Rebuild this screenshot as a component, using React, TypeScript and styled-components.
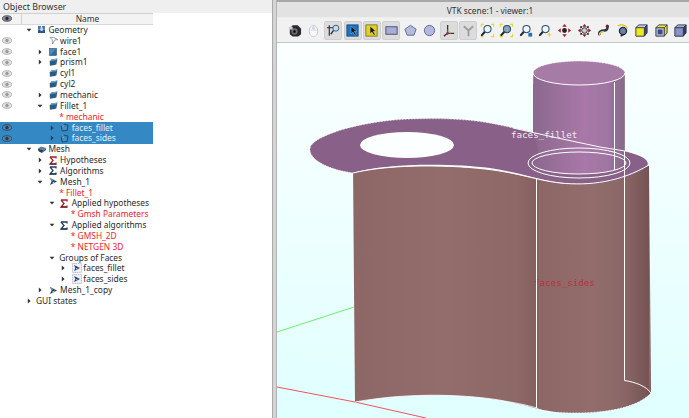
import React from "react";
import styled, { createGlobalStyle } from "styled-components";

const Global = createGlobalStyle`
  html, body { margin: 0; padding: 0; background: #fff; overflow: hidden; }
  #root { width: 689px; height: 418px; }
`;

const Page = styled.div`
  width: 689px; height: 418px; display: flex; overflow: hidden;
  font-family: "Noto Sans", "Open Sans", sans-serif; font-size: 8.4px; color: #2a2a2a;
`;
const Browser = styled.section`
  width: 272px; flex: none; display: flex; flex-direction: column; background: #fff;
`;
const BrowserTitle = styled.div`
  height: 13px; flex: none; background: #efefef; padding-left: 3px; line-height: 14px; font-size: 8.8px; color: #333;
`;
const TreeColumn = styled.div`
  width: 153px; display: flex; flex-direction: column;
`;
const Header = styled.div`
  height: 11.5px; box-sizing: border-box; display: flex; background: #f3f3f3; border-top: 1px solid #d0d0d0; border-bottom: 1px solid #d8d8d8;
`;
const HeaderEye = styled.div`
  width: 22px; flex: none; display: flex; align-items: center; padding-left: 2px; box-sizing: border-box; border-right: 1px solid #d0d0d0;
`;
const HeaderName = styled.div`
  flex: 1; text-align: center; line-height: 10px; color: #333;
`;
const Row = styled.div<{ $selected?: boolean }>`
  height: 10.85px; display: flex; align-items: center; white-space: nowrap;
  background: ${p => (p.$selected ? "#3488c3" : "transparent")};
  color: ${p => (p.$selected ? "#e4eefa" : "#2a2a2a")};
`;
const EyeSlot = styled.div`
  width: 22px; flex: none; padding-left: 2px; box-sizing: border-box; display: flex; align-items: center;
`;
const Indent = styled.div<{ $level: number }>`
  width: ${p => 2 + p.$level * 11.6}px; flex: none;
`;
const ArrowSlot = styled.div`
  width: 12px; flex: none; display: flex; justify-content: center; align-items: center; padding-right: 3px; box-sizing: border-box;
`;
const IconSlot = styled.div`
  width: 12.5px; flex: none; display: flex; align-items: center; padding-left: 1px; box-sizing: border-box;
`;
const Label = styled.span<{ $red?: boolean }>`
  color: ${p => (p.$red ? "#f0232b" : "inherit")}; line-height: 10px;
`;
const Splitter = styled.div`
  width: 5px; flex: none; background: #d4d4d4; border-left: 1px solid #aaa; border-right: 1px solid #b4b4b4; box-sizing: border-box;
`;
const Viewer = styled.section`
  flex: 1; min-width: 0; display: flex; flex-direction: column; border-top: 2px solid #a8a8a8; box-sizing: border-box; background: #f1f1f1;
`;
const ViewerTitle = styled.div`
  height: 16px; box-sizing: border-box; flex: none; background: #e2e2e2; text-align: center; line-height: 17px; font-size: 8.4px; color: #333;
  padding-left: 14px; border-bottom: 1px solid #ededed;
`;
const Toolbar = styled.div`
  height: 25px; box-sizing: border-box; flex: none; display: grid; grid-auto-flow: column; grid-auto-columns: 19.3px; align-items: center; justify-items: center;
  padding: 1px 0 0 8px; border-bottom: 1px solid #c4c4c4; background: #f1f1f1;
`;
const ToolButton = styled.div<{ $active?: boolean }>`
  width: 18px; height: 19px; display: flex; align-items: center; justify-content: center; box-sizing: border-box; border-radius: 2px;
  background: ${p => (p.$active ? "#dcdcdc" : "transparent")};
  border: 1px solid ${p => (p.$active ? "#cfcfcf" : "transparent")};
`;
const Scene = styled.div`
  flex: 1; min-height: 0; background: linear-gradient(#fbffff, #e0ffff);
`;
const SceneSvg = styled.svg`
  display: block; width: 100%; height: 100%;
`;

const Eye = ({ tone }: { tone: "head" | "dim" | "sel" }) => {
  const c = tone === "head" ? "#2b2b35" : tone === "sel" ? "#1f3d58" : "#9a9a9a";
  return (
    <svg width="10" height="7" viewBox="0 0 10 7">
      <ellipse cx="5" cy="3.5" rx="4.6" ry="2.8" fill={tone === "head" ? "#8c8c98" : tone === "sel" ? "#5c7f9c" : "#e2e2e2"} stroke={c} strokeWidth=".7" />
      <circle cx="5" cy="3.5" r="1.7" fill={c} />
    </svg>
  );
};

const Arrow = ({ open, faint }: { open?: boolean; faint?: boolean }) => (
  <svg width="6" height="6" viewBox="0 0 6 6">
    {open ? <path d="M.6 1.8h4.8L3 4.6z" fill="#333" /> : <path d="M1.8.6v4.8L4.6 3z" fill={faint ? "#1d3f5c" : "#333"} />}
  </svg>
);

type TreeIconKind = "geom" | "wire" | "face" | "solid" | "meshRoot" | "hyp" | "alg" | "mesh" | "group" | "solidSel";

const TreeIcon = ({ kind }: { kind: TreeIconKind }) => {
  switch (kind) {
    case "geom":
      return (
        <svg width="9" height="9" viewBox="0 0 9 9">
          <path d="M1 1h3v3.4H1zM5 1h3v3.4H5z" fill="#4a78a8" />
          <path d="M1 4.6h7V8H1z" fill="#2f5480" />
          <path d="M3.4 2.5h2.4v3.4H3.4z" fill="#c8d8e8" />
        </svg>
      );
    case "wire":
      return (
        <svg width="10" height="9" viewBox="0 0 10 9" fill="none" stroke="#7b8794" strokeWidth=".8">
          <path d="M1 1.4h3.4L9 3.6 5.6 4 3.6 8 3 3.4 1 1.4z" />
        </svg>
      );
    case "face":
      return (
        <svg width="8" height="8" viewBox="0 0 8 8">
          <rect x=".5" y=".5" width="7" height="7" fill="#2e6ca0" stroke="#1c3f60" strokeWidth=".5" />
          <path d="M1 1h6L1 7z" fill="#4d8cc0" />
        </svg>
      );
    case "solid":
      return (
        <svg width="9" height="8" viewBox="0 0 9 8">
          <path d="M2 1.6 8.4.6 7.4 6.4 1 7.4z" fill="#2f6595" />
          <path d="M.7 3 2.6 1.4 8.3.7 6.6 2.4z" fill="#7ea6cb" />
          <path d="M.7 3 6.6 2.4 6.2 7 .9 7.6z" fill="#2a5a86" />
        </svg>
      );
    case "solidSel":
      return (
        <svg width="9" height="9" viewBox="0 0 9 9" fill="none">
          <path d="M1.2 3.6 4 1.2l4 .8-.8 5.4-5 .6z" stroke="#1e4566" strokeWidth=".9" />
          <path d="M3 4h3v2.6H3z" fill="#5c8cb2" />
          <path d="M3 1v3" stroke="#a7c3da" strokeWidth=".7" />
        </svg>
      );
    case "meshRoot":
      return (
        <svg width="10" height="9" viewBox="0 0 10 9">
          <path d="M1 3.5 4 1.5l5 1.4-2.5 2.4z" fill="#5a7f9e" />
          <path d="M1 3.5 6.5 5.3 5 8 1.5 6.2z" fill="#233f58" />
          <path d="M6.5 5.3 9 2.9v2L5 8z" fill="#3b5f7e" />
        </svg>
      );
    case "hyp":
    case "alg":
      return (
        <svg width="8" height="9" viewBox="0 0 8 9" fill="none">
          <path d="M1 1h6v1.4M1 1l3 3.4L1 8h6V6.6" stroke={kind === "hyp" ? "#a81e22" : "#1f3f66"} strokeWidth="1.3" />
          <path d="M1 8h6" stroke="#222" strokeWidth=".8" />
        </svg>
      );
    case "mesh":
      return (
        <svg width="9" height="9" viewBox="0 0 9 9">
          <path d="M1 1 8 4.4 1 8 2.6 4.4z" fill="#1f3f5c" />
          <path d="M1 1 5 3 2.6 4.4z" fill="#6f92ae" />
          <path d="M3.4 5.2 6 4.6 4 6.8z" fill="#c4d4e0" />
        </svg>
      );
    case "group":
      return (
        <svg width="10" height="10" viewBox="0 0 10 10">
          <rect x=".5" y=".5" width="9" height="9" fill="#eef0f6" stroke="#7f7fb4" strokeWidth=".6" strokeDasharray="1 .8" />
          <path d="M2 2 8 5 2 8 3.4 5z" fill="#1f3f5c" />
          <path d="M3.9 5.2 6 4.8 4.4 6.4z" fill="#c4d4e0" />
        </svg>
      );
  }
};

type RowData = { level: number; arrow?: "open" | "closed"; icon?: TreeIconKind; text: string; eye?: boolean; red?: boolean; sel?: boolean };

const rows: RowData[] = [
  { level: 0, arrow: "open", icon: "geom", text: "Geometry" },
  { level: 1, icon: "wire", text: "wire1", eye: true },
  { level: 1, arrow: "closed", icon: "face", text: "face1", eye: true },
  { level: 1, arrow: "closed", icon: "solid", text: "prism1", eye: true },
  { level: 1, icon: "solid", text: "cyl1", eye: true },
  { level: 1, icon: "solid", text: "cyl2", eye: true },
  { level: 1, arrow: "closed", icon: "solid", text: "mechanic", eye: true },
  { level: 1, arrow: "open", icon: "solid", text: "Fillet_1", eye: true },
  { level: 2, text: "* mechanic", red: true },
  { level: 2, arrow: "closed", icon: "solidSel", text: "faces_fillet", eye: true, sel: true },
  { level: 2, arrow: "closed", icon: "solidSel", text: "faces_sides", eye: true, sel: true },
  { level: 0, arrow: "open", icon: "meshRoot", text: "Mesh" },
  { level: 1, arrow: "closed", icon: "hyp", text: "Hypotheses" },
  { level: 1, arrow: "closed", icon: "alg", text: "Algorithms" },
  { level: 1, arrow: "open", icon: "mesh", text: "Mesh_1" },
  { level: 2, text: "* Fillet_1", red: true },
  { level: 2, arrow: "open", icon: "hyp", text: "Applied hypotheses" },
  { level: 3, text: "* Gmsh Parameters", red: true },
  { level: 2, arrow: "open", icon: "alg", text: "Applied algorithms" },
  { level: 3, text: "* GMSH_2D", red: true },
  { level: 3, text: "* NETGEN 3D", red: true },
  { level: 2, arrow: "open", text: "Groups of Faces" },
  { level: 3, arrow: "closed", icon: "group", text: "faces_fillet" },
  { level: 3, arrow: "closed", icon: "group", text: "faces_sides" },
  { level: 1, arrow: "closed", icon: "mesh", text: "Mesh_1_copy" },
  { level: 0, arrow: "closed", text: "GUI states" },
];

const Lens = ({ x = 8, y = 6.5, corners, fill = "#eef6fb" }: { x?: number; y?: number; corners?: string; fill?: string }) => (
  <>
    {corners && <path d="M1.5 4V1.5H4M12 1.5h2.5V4M1.5 12v2.5H4M12 14.5h2.5V12" fill="none" stroke={corners} strokeWidth="1.2" />}
    <path d={`M${x - 2.8} ${y + 2.8}L${x - 6} ${y + 6.4}`} stroke="#1c2a38" strokeWidth="2.2" strokeLinecap="round" />
    <circle cx={x} cy={y} r="3.8" fill={fill} stroke="#2c4d6c" strokeWidth="1.1" />
  </>
);

const Pan = ({ dots }: { dots?: boolean }) => (
  <>
    <path d="M8 1 10.4 4H5.6zM8 15 5.6 12h4.8zM1 8 4 5.6v4.8zM15 8 12 5.6v4.8z" fill={dots ? "#8c1c24" : "#a81c26"} />
    {dots ? <circle cx="8" cy="8" r="3" fill="#c8ccd4" stroke="#2a2a30" strokeWidth="1" /> : <circle cx="8" cy="8" r="2.6" fill="#2a2228" />}
    {dots && <path d="M3.4 3.4h2v2h-2zM10.6 3.4h2v2h-2zM3.4 10.6h2v2h-2zM10.6 10.6h2v2h-2z" fill="#2a2a30" />}
  </>
);

const Cube = ({ front, top, side, inner }: { front: string; top: string; side: string; inner?: string }) => (
  <>
    <path d="M2 5 5 2h9v8.5L11 14H2z" fill={side} />
    <path d="M2 5 5 2h9l-3 3z" fill={top} />
    <path d="M2 5h9v9H2z" fill={front} />
    {inner && <path d="M4 7h5v5H4z" fill={inner} />}
    <path d="M2 5 5 2h9v8.5L11 14H2zM2 5h9l3-3M11 5v9" fill="none" stroke="#26304c" strokeWidth=".9" />
  </>
);

const toolIcons: { active?: boolean; draw: React.ReactNode }[] = [
  { draw: <><path d="M3 6 6 2.5h5.5L15 6v6l-3 2.5H6L3 12z" fill="#2a2a2e" /><circle cx="8" cy="9" r="3.3" fill="#6f6f72" /><circle cx="8" cy="9" r="1.6" fill="#17171a" /><path d="M2 4h4v3H2z" fill="#cfcfcf" /></> },
  { draw: <><ellipse cx="8" cy="8.6" rx="4.6" ry="6" fill="#fbfbfd" stroke="#b7bfca" strokeWidth=".8" /><path d="M8 3v4M3.6 7.6h8.8" stroke="#bcc4d0" strokeWidth=".7" /><path d="M6.5 4h3v2.5h-3z" fill="#cad8ea" /></> },
  { active: true, draw: <><path d="M3.5 2.5v11M1 5h9" stroke="#24303e" strokeWidth="1.2" fill="none" /><circle cx="10.5" cy="5.5" r="3.2" fill="#c8dcea" stroke="#3a5a78" strokeWidth="1" /><path d="M8 8 5 12" stroke="#24303e" strokeWidth="1.4" /></> },
  { active: true, draw: <><rect x="2" y="2" width="12" height="12" fill="#1b74c4" stroke="#0e3f70" strokeWidth=".8" /><path d="M6.5 3.5v8l2-2 2 3.5 1.4-.8-2-3.4h2.8z" fill="#14171c" stroke="#cfe2f2" strokeWidth=".4" /></> },
  { active: true, draw: <><rect x="2" y="2" width="12" height="12" fill="#e3cf1e" stroke="#6e6410" strokeWidth=".8" /><path d="M6.5 3.5v8l2-2 2 3.5 1.4-.8-2-3.4h2.8z" fill="#14171c" stroke="#f6f2b0" strokeWidth=".4" /></> },
  { active: true, draw: <rect x="2" y="4" width="12" height="8" fill="#a9acd6" stroke="#4a4f6c" strokeWidth="1" /> },
  { draw: <path d="M8 2.5 14 6.6 11.7 13H4.4L2 6.6z" fill="#b4bbdd" stroke="#5f6a8c" strokeWidth="1" /> },
  { draw: <circle cx="8" cy="8" r="5.5" fill="#b4b6e0" stroke="#5f6a8c" strokeWidth="1" /> },
  { active: true, draw: <><path d="M6 2v9M6 11l-4 3M6 11h7" stroke="#34383e" strokeWidth="1.4" fill="none" /><path d="M6 7l4 4H6z" fill="#c4b078" /><circle cx="6" cy="11" r="1.4" fill="#a0283a" /></> },
  { active: true, draw: <path d="M3 3.5 8 8l5-4.5M8 8v6" stroke="#9c9ea4" strokeWidth="2" fill="none" /> },
  { draw: <Lens corners="#e6d81e" /> },
  { draw: <Lens corners="#e6d81e" fill="#8aa4b8" x={8.5} /> },
  { draw: <><Lens /><rect x="10" y="10.5" width="4" height="4" fill="#1f70b8" /></> },
  { draw: <><Lens /><path d="M10 12.5h4M12 10.5v4" stroke="#e6d81e" strokeWidth="1.2" /></> },
  { draw: <Pan /> },
  { draw: <Pan dots /> },
  { draw: <><path d="M4 13C2 9 6 8 9 8s4-3 3-5" fill="none" stroke="#26324a" strokeWidth="2.6" /><path d="M4 13C3 10 6 9.4 8.4 9" fill="none" stroke="#e6d21e" strokeWidth="1.6" /><circle cx="12" cy="3.4" r="1.7" fill="#8c1c24" /></> },
  { draw: <><circle cx="8.5" cy="8.5" r="3.8" fill="#6f7ea6" stroke="#1f2a44" strokeWidth="1.4" /><path d="M3 3c4-2 9-1 10 3" fill="none" stroke="#d8c41e" strokeWidth="1.4" /><path d="M6 14l4-2" stroke="#222" strokeWidth="1.4" /></> },
  { draw: <Cube front="#f2e81c" top="#c8d0dc" side="#3a4a78" /> },
  { draw: <Cube front="#b6b8d8" top="#f2e81c" side="#e4d81c" inner="#3a4a88" /> },
  { draw: <Cube front="#8a92c8" top="#a8aed0" side="#333c66" /> },
];

const SceneLabel = styled.text`
  font-family: "DejaVu Sans Mono", "Liberation Mono", monospace; font-size: 9.2px;
`;

const Scene3D = () => (
  <SceneSvg viewBox="277 43 412 375" preserveAspectRatio="none">
    <defs>
      <linearGradient id="bodyG" gradientUnits="userSpaceOnUse" x1="353" x2="651" y1="0" y2="0">
        <stop offset="0" stopColor="#8c6766" />
        <stop offset=".3" stopColor="#926d6b" />
        <stop offset=".55" stopColor="#8d6867" />
        <stop offset=".62" stopColor="#835f5e" />
        <stop offset=".625" stopColor="#8c6766" />
        <stop offset=".8" stopColor="#926d6b" />
        <stop offset=".91" stopColor="#8a6766" />
        <stop offset="1" stopColor="#735251" />
      </linearGradient>
      <linearGradient id="cylG" gradientUnits="userSpaceOnUse" x1="533" x2="625" y1="0" y2="0">
        <stop offset="0" stopColor="#8b688d" />
        <stop offset=".55" stopColor="#a878a8" />
        <stop offset=".8" stopColor="#a076a2" />
        <stop offset="1" stopColor="#866988" />
      </linearGradient>
    </defs>

    <path d="M277 332 354 307" stroke="#66f466" strokeWidth="1" />
    <path d="M277 387 355 402 426 418" stroke="#f2525a" strokeWidth="1" fill="none" />

    <path
      d="M353 173C385 165 440 164 485 169C520 173 535 180 560 183C590 186 620 182 649 165L651 393C640 405 615 413 575 413C545 413 535 407 510 402C470 394 410 392 355 402Z"
      fill="url(#bodyG)"
    />
    <path
      d="M310 148C312 138 345 126 385 121C420 117 465 118 495 124C530 131 570 141 605 147C630 152 648 156 648 164C645 172 620 183 585 184C550 185 525 173 490 168C450 163 385 163 353 173C330 170 308 160 310 148Z"
      fill="#896188"
    />
    <path d="M533 73V163A46 11 0 0 0 625 163V73Z" fill="url(#cylG)" />
    <ellipse cx="579" cy="73" rx="46" ry="12" fill="#a67ba6" />
    <path d="M533 130V163L540 158 533 130Z" fill="#896188" />
    <ellipse cx="407" cy="145" rx="47" ry="13" fill="#fbffff" />

    <g fill="none" stroke="#fff">
      <path d="M533 73A46 12 0 0 0 625 73" strokeWidth="1" />
      <path d="M533 73A46 12 0 0 1 625 73" strokeWidth=".6" strokeDasharray="2 1" />
      <path d="M533 73V84M625 73V150" strokeWidth=".5" opacity=".6" />
      <path d="M614.5 82V170" strokeWidth="1" />
      <path d="M513 128 553 137 600 147 625 151" strokeWidth="1" />
      <ellipse cx="579" cy="163" rx="51" ry="15" strokeWidth="1" />
      <ellipse cx="579" cy="163" rx="47" ry="11" strokeWidth="1" />
      <path d="M353 173C385 165 440 164 485 169C520 173 535 180 560 183C590 186 620 182 649 165" strokeWidth="1" />
      <path d="M310 148C312 138 345 126 385 121C420 117 465 118 495 124L513 128" strokeWidth=".6" strokeDasharray="1.5 1.5" />
      <path d="M353 173C330 170 308 160 310 148M625 151C635 153 648 156 648 164" strokeWidth=".6" strokeDasharray="1.5 1" />
      <path d="M353 173V402M649.5 165V393" strokeWidth=".5" opacity=".3" />
    </g>

    <SceneLabel x="511" y="138" fill="#f3eaf3">faces_fillet</SceneLabel>
    <SceneLabel x="534" y="286" fill="#b93040">faces_sides</SceneLabel>

    <g fill="none" stroke="#fff">
      <path d="M536.5 178V408" strokeWidth="1" />
      <path d="M624.5 151V380.5C635 382 646 386 651 393" strokeWidth="1" />
      <path d="M355 402C410 392 470 394 510 402C522 404 530 406 537 408" strokeWidth=".8" />
      <path d="M537 408C545 413 560 413 575 413C615 413 640 405 651 393" strokeWidth=".7" strokeDasharray="2 1" />
    </g>
  </SceneSvg>
);

export default function App() {
  return (
    <Page>
      <Global />
      <Browser>
        <BrowserTitle>Object Browser</BrowserTitle>
        <TreeColumn>
          <Header>
            <HeaderEye><Eye tone="head" /></HeaderEye>
            <HeaderName>Name</HeaderName>
          </Header>
          {rows.map((r, i) => (
            <Row key={i} $selected={r.sel}>
              <EyeSlot>{r.eye && <Eye tone={r.sel ? "sel" : "dim"} />}</EyeSlot>
              <Indent $level={r.level} />
              <ArrowSlot>{r.arrow && <Arrow open={r.arrow === "open"} faint={r.sel} />}</ArrowSlot>
              {r.icon && <IconSlot><TreeIcon kind={r.icon} /></IconSlot>}
              <Label $red={r.red}>{r.text}</Label>
            </Row>
          ))}
        </TreeColumn>
      </Browser>
      <Splitter />
      <Viewer>
        <ViewerTitle>VTK scene:1 - viewer:1</ViewerTitle>
        <Toolbar>
          {toolIcons.map((t, i) => (
            <ToolButton key={i} $active={t.active}>
              <svg width="15" height="15" viewBox="0 0 16 16">{t.draw}</svg>
            </ToolButton>
          ))}
        </Toolbar>
        <Scene><Scene3D /></Scene>
      </Viewer>
    </Page>
  );
}
